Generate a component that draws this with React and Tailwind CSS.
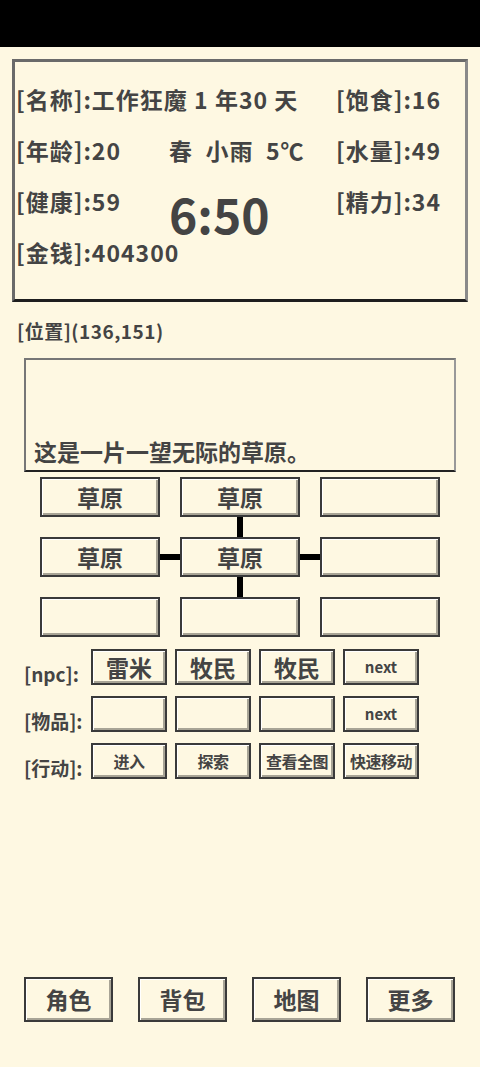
import React from 'react';

const font = { fontFamily: '"Noto Sans CJK SC", "Noto Sans", sans-serif' };

const Box = ({ children, className = '' }) => (
  <div
    className={`flex items-center justify-center bg-[#fef8e2] border-2 border-[#3a3a3a] shadow-[inset_1px_1px_0_#fff,inset_-2px_-2px_0_#a8a496] font-bold text-[#444] ${className}`}
  >
    {children}
  </div>
);

const MapCell = ({ label }) => <Box className="w-[120px] h-[40px] text-[23px]">{label}</Box>;

const Label = ({ children }) => (
  <div className="w-[67px] text-[19px] font-bold text-[#444] whitespace-nowrap leading-none pt-[15px]">{children}</div>
);

const SmallBtn = ({ children, className = '' }) => (
  <Box className={`w-[76px] h-[36px] ${className}`}>{children}</Box>
);

const App = () => {
  const npcs = ['雷米', '牧民', '牧民'];
  const actions = ['进入', '探索', '查看全图', '快速移动'];

  return (
    <div className="w-[480px] h-[1067px] bg-[#fef8e2] flex flex-col text-[#444]" style={font}>
      <div className="h-[47px] bg-black shrink-0" />

      {/* status panel */}
      <div className="mx-[12px] mt-[12px] h-[243px] border-[3px] border-[#6a6a6a] border-b-[#1e1e1e] border-r-[#8a8a8a] pt-[12px] font-bold text-[23px] tracking-[1px]">
        <div className="grid grid-cols-[153px_167px_130px] grid-rows-[51px_51px_51px_51px] pl-[1px]">
          <div className="col-span-2 flex items-center whitespace-nowrap">[名称]:工作狂魔 1 年30 天</div>
          <div className="flex items-center">[饱食]:16</div>

          <div className="flex items-center">[年龄]:20</div>
          <div className="flex items-center whitespace-pre">春  小雨  5℃</div>
          <div className="flex items-center">[水量]:49</div>

          <div className="flex items-center">[健康]:59</div>
          <div className="row-span-2 text-[48px] leading-none pt-[13px] tracking-normal">6:50</div>
          <div className="flex items-center">[精力]:34</div>

          <div className="flex items-center whitespace-nowrap">[金钱]:404300</div>
          <div />
        </div>
      </div>

      {/* position */}
      <div className="mt-[19px] ml-[17px] text-[19px] font-bold leading-none tracking-[0.5px]">[位置](136,151)</div>

      {/* description */}
      <div className="mx-[24px] mt-[18px] h-[114px] border-2 border-[#777] border-b-[#222] border-r-[#999] flex items-end px-[8px] pb-[2px]">
        <span className="text-[23px] font-bold">这是一片一望无际的草原。</span>
      </div>

      {/* map */}
      <div className="ml-[40px] mt-[5px] flex flex-col">
        <div className="flex gap-[20px]">
          <MapCell label="草原" />
          <MapCell label="草原" />
          <MapCell />
        </div>
        <div className="flex">
          <div className="w-[140px]" />
          <div className="w-[120px] h-[20px] flex justify-center">
            <div className="w-[6px] h-full bg-black" />
          </div>
        </div>
        <div className="flex items-center">
          <MapCell label="草原" />
          <div className="w-[20px] h-[6px] bg-black" />
          <MapCell label="草原" />
          <div className="w-[20px] h-[6px] bg-black" />
          <MapCell />
        </div>
        <div className="flex">
          <div className="w-[140px]" />
          <div className="w-[120px] h-[20px] flex justify-center">
            <div className="w-[6px] h-full bg-black" />
          </div>
        </div>
        <div className="flex gap-[20px]">
          <MapCell />
          <MapCell />
          <MapCell />
        </div>
      </div>

      {/* npc / items / actions */}
      <div className="ml-[24px] mt-[12px] flex flex-col gap-[11px]">
        <div className="flex items-start">
          <Label>[npc]:</Label>
          <div className="flex gap-[8px]">
            {npcs.map((n, i) => (
              <SmallBtn key={i} className="text-[23px]">{n}</SmallBtn>
            ))}
            <SmallBtn className="text-[15px]">next</SmallBtn>
          </div>
        </div>
        <div className="flex items-start">
          <Label>[物品]:</Label>
          <div className="flex gap-[8px]">
            <SmallBtn />
            <SmallBtn />
            <SmallBtn />
            <SmallBtn className="text-[15px]">next</SmallBtn>
          </div>
        </div>
        <div className="flex items-start">
          <Label>[行动]:</Label>
          <div className="flex gap-[8px]">
            {actions.map((a) => (
              <SmallBtn key={a} className="text-[16px] whitespace-nowrap tracking-[-0.5px]">{a}</SmallBtn>
            ))}
          </div>
        </div>
      </div>

      {/* bottom nav */}
      <div className="mt-auto mb-[45px] ml-[24px] flex gap-[25px]">
        {['角色', '背包', '地图', '更多'].map((t) => (
          <Box key={t} className="w-[89px] h-[45px] text-[23px]">{t}</Box>
        ))}
      </div>
    </div>
  );
};

export default App;
